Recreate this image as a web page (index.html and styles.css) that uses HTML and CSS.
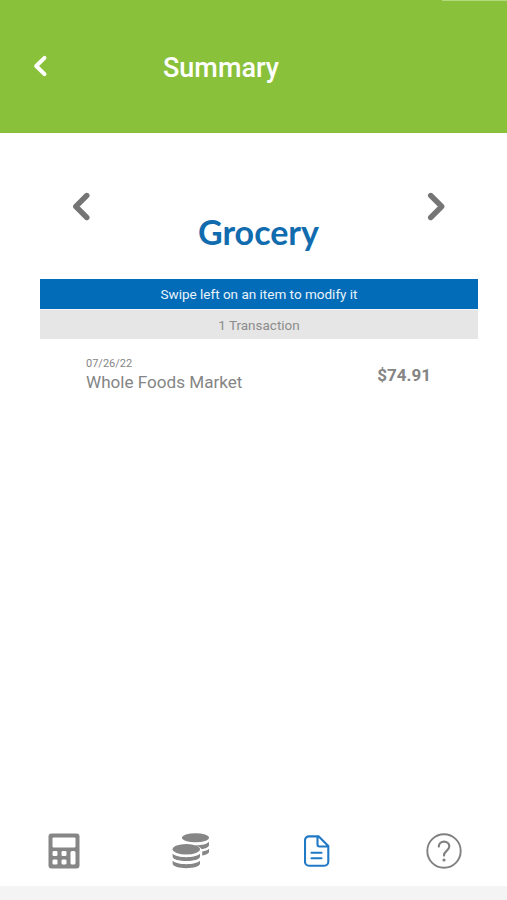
FILE: index.html
```html
<!DOCTYPE html>
<html lang="en">
<head>
<meta charset="utf-8">
<title>Summary</title>
<link rel="stylesheet" href="styles.css">
</head>
<body>
<div class="app">
  <header class="header">
    <svg class="back" width="16" height="24" viewBox="0 0 16 24"><path d="M12.5 3.8 4.2 12l8.3 8.2"/></svg>
    <h1 class="title">Summary</h1>
  </header>
  <main class="content">
    <div class="category">
      <svg class="arrow" width="20" height="30" viewBox="0 0 20 30"><path d="M15.8 4.5 4.8 15.5l11 11"/></svg>
      <h2 class="name">Grocery</h2>
      <svg class="arrow" width="20" height="30" viewBox="0 0 20 30"><path d="M4.7 4.5l11 11-11 11"/></svg>
    </div>
    <div class="hint"><span>Swipe left on an item to modify it</span></div>
    <div class="count"><span>1 Transaction</span></div>
    <div class="transaction">
      <div class="details">
        <div class="date">07/26/22</div>
        <div class="store">Whole Foods Market</div>
      </div>
      <div class="amount">$74.91</div>
    </div>
  </main>
  <nav class="tabs">
    <a class="tab calculator"><svg width="32" height="36" viewBox="0 0 32 36"><path fill="#868686" fill-rule="evenodd" d="M3.5 0.5h25a3 3 0 0 1 3 3v29a3 3 0 0 1-3 3h-25a3 3 0 0 1-3-3v-29a3 3 0 0 1 3-3zM5.5 4.5a1 1 0 0 0-1 1v8a1 1 0 0 0 1 1h21a1 1 0 0 0 1-1v-8a1 1 0 0 0-1-1zM5.8 18a1.3 1.3 0 0 0-1.3 1.3v2.4a1.3 1.3 0 0 0 1.3 1.3h2.4a1.3 1.3 0 0 0 1.3-1.3v-2.4a1.3 1.3 0 0 0-1.3-1.3zM14.8 18a1.3 1.3 0 0 0-1.3 1.3v2.4a1.3 1.3 0 0 0 1.3 1.3h2.4a1.3 1.3 0 0 0 1.3-1.3v-2.4a1.3 1.3 0 0 0-1.3-1.3zM5.8 26.5a1.3 1.3 0 0 0-1.3 1.3v2.4a1.3 1.3 0 0 0 1.3 1.3h2.4a1.3 1.3 0 0 0 1.3-1.3v-2.4a1.3 1.3 0 0 0-1.3-1.3zM14.8 26.5a1.3 1.3 0 0 0-1.3 1.3v2.4a1.3 1.3 0 0 0 1.3 1.3h2.4a1.3 1.3 0 0 0 1.3-1.3v-2.4a1.3 1.3 0 0 0-1.3-1.3zM24 18a1.5 1.5 0 0 0-1.5 1.5v10.5a1.5 1.5 0 0 0 1.5 1.5h2a1.5 1.5 0 0 0 1.5-1.5v-10.5a1.5 1.5 0 0 0-1.5-1.5z"/></svg></a>
    <a class="tab coins"><svg width="38" height="36" viewBox="0 0 38 36"><g fill="#868686"><ellipse cx="23.5" cy="4.8" rx="13.5" ry="4.5"/><path d="M37 8.7v3.2c0 2-3.5 3.6-7.5 4.2-1.2-1.9-4-3.3-7-4 5.8.2 12.5-.7 14.5-3.4zM37 15.7v3.1c0 1.7-3 3.2-6.8 3.8v-4.1c3-.5 5.7-1.4 6.8-2.8z"/><ellipse cx="14.3" cy="16.2" rx="13.7" ry="5.2"/><path d="M.6 20.8c4.6 4.5 22.8 4.5 27.4 0v2.8c0 6-27.4 6-27.4 0zM.6 27.8c4.6 4.5 22.8 4.5 27.4 0v2.8c0 6.2-27.4 6.2-27.4 0z"/></g></svg></a>
    <a class="tab"><svg width="26" height="32" viewBox="0 0 26 32"><g fill="none" stroke="#2079c5" stroke-width="2.1" stroke-linecap="round" stroke-linejoin="round"><path d="M5 1.4h9.8l9.5 9.6v15.7a4 4 0 0 1-4 4H5a4 4 0 0 1-4-4V5.4a4 4 0 0 1 4-4zM13.5 1.5v8a2 2 0 0 0 2 2h8.5M7.5 17.8h10M7.5 23.3h10"/></g></svg></a>
    <a class="tab"><svg width="36" height="36" viewBox="0 0 36 36"><g fill="none" stroke="#818181"><circle cx="18" cy="18" r="16.7" stroke-width="1.9"/><path d="M12.8 13.6c0-3 2.2-4.9 5.3-4.9s5.2 1.9 5.2 4.6c0 4.4-5.3 4.2-5.3 9.3" stroke-width="2.2" stroke-linecap="round"/></g><circle cx="18" cy="27" r="1.6" fill="#818181"/></svg></a>
  </nav>
  <div class="system"></div>
</div>
</body>
</html>
```
FILE: styles.css
```css
* { box-sizing: border-box; }
body { margin: 0; background: #fff; font-family: Roboto, sans-serif; }
.app { display: flex; flex-direction: column; height: 900px; }
.header {
  display: flex;
  flex: none;
  height: 133px;
  padding: 54px 0 0 32px;
  background: linear-gradient(#b5da7e, #b5da7e) 442px 0 / 65px 1px no-repeat #89c13b;
}
.back { fill: none; stroke: #fff; stroke-width: 4; stroke-linecap: round; stroke-linejoin: round; }
.title { margin: -2px 0 0 115px; color: #fff; font-size: 27px; font-weight: 500; line-height: 32px; white-space: nowrap; }
.content { flex: 1; padding: 58px 29px 0 40px; }
.category { display: flex; justify-content: space-between; height: 88px; padding: 0 32px 0 31px; }
.arrow { fill: none; stroke: #757575; stroke-width: 5.4; stroke-linecap: round; stroke-linejoin: round; }
.name { margin: 20px 0 0; color: #106cae; font-family: Lato, sans-serif; font-size: 34px; font-weight: 700; line-height: 42px; }
.hint, .count { display: flex; align-items: center; justify-content: center; height: 30px; font-size: 13.5px; }
.hint { background: #036cb8; color: #e9f3fa; }
.count { background: #e6e6e6; border-top: 1px solid #f0f5f9; color: #8c8c8c; }
.transaction { display: flex; justify-content: space-between; padding: 18px 47px 0 46px; color: #858585; }
.date { font-size: 11px; line-height: 14px; }
.store { font-size: 17.1px; line-height: 22px; }
.amount { margin-top: 7px; font-size: 17px; font-weight: 700; line-height: 22px; }
.tabs { display: grid; grid-template-columns: repeat(4, 1fr); height: 69px; margin-bottom: 1px; }
.tab { display: flex; align-items: center; justify-content: center; }
.calculator, .coins { padding-left: 1px; }
.system { height: 14px; background: #f4f4f4; }
```
